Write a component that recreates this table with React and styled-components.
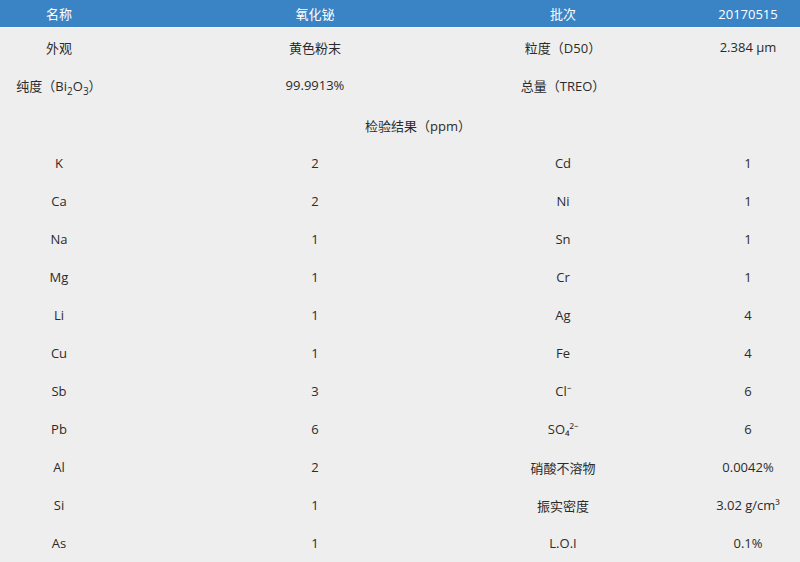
import styled, { createGlobalStyle } from 'styled-components'

const GlobalStyle = createGlobalStyle`
    html, body {
        margin: 0;
        padding: 0;
        background: #eeeeee;
        overflow: hidden;
    }
    body {
        font-family: "Open Sans", "Noto Sans CJK SC", sans-serif;
        color: #2b2b2b;
    }
`

const Viewport = styled.div`
    width: 800px;
    height: 562px;
    overflow: hidden;
    background: #eeeeee;
`

const Table = styled.div`
    width: 882px;
    display: grid;
    grid-template-columns: 118px 394px 102px 268px;
    font-size: 13px;
`

const HeadCell = styled.div`
    height: 27px;
    background: #3a84c6;
    color: #ffffff;
    border-bottom: 1px solid #f6f6f6;
    display: flex;
    align-items: center;
    justify-content: center;
    white-space: nowrap;
`

const Cell = styled.div`
    height: 38px;
    display: flex;
    align-items: center;
    justify-content: center;
    white-space: nowrap;
`

const SectionCell = styled(Cell)`
    grid-column: 1 / -1;
    padding-right: 46px;
    padding-top: 2px;
`

const Sub = styled.sub`
    font-size: 10px;
    vertical-align: -4px;
    line-height: 0;
`

const head = ['名称', '氧化铋', '批次', '20170515']

const rows = [
    ['K', '2', 'Cd', '1'],
    ['Ca', '2', 'Ni', '1'],
    ['Na', '1', 'Sn', '1'],
    ['Mg', '1', 'Cr', '1'],
    ['Li', '1', 'Ag', '4'],
    ['Cu', '1', 'Fe', '4'],
    ['Sb', '3', 'Cl⁻', '6'],
    ['Pb', '6', 'SO₄²⁻', '6'],
    ['Al', '2', '硝酸不溶物', '0.0042%'],
    ['Si', '1', '振实密度', '3.02 g/cm³'],
    ['As', '1', 'L.O.I', '0.1%'],
]

export default function App() {
    return (
        <Viewport>
            <GlobalStyle />
            <Table>
                {head.map((h) => (
                    <HeadCell key={h}>{h}</HeadCell>
                ))}

                <Cell>外观</Cell>
                <Cell>黄色粉末</Cell>
                <Cell>粒度（D50）</Cell>
                <Cell>2.384 μm</Cell>

                <Cell>
                    <span>
                        纯度（Bi<Sub>2</Sub>O<Sub>3</Sub>）
                    </span>
                </Cell>
                <Cell>99.9913%</Cell>
                <Cell>总量（TREO）</Cell>
                <Cell></Cell>

                <SectionCell>检验结果（ppm）</SectionCell>

                {rows.map((r) =>
                    r.map((v, i) => <Cell key={r[0] + i}>{v}</Cell>)
                )}
            </Table>
        </Viewport>
    )
}
